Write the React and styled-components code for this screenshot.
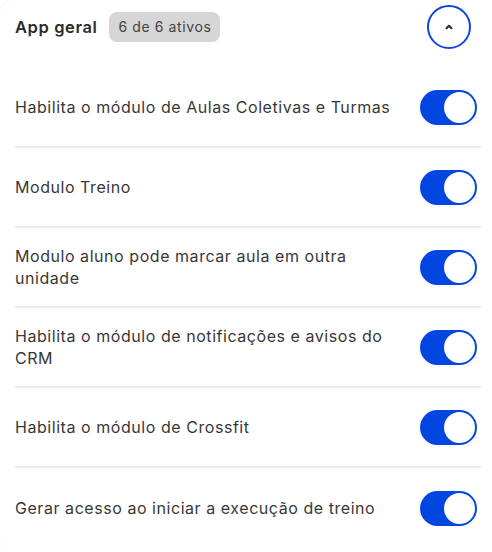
import React, { useState } from "react";
import styled, { createGlobalStyle } from "styled-components";

const GlobalStyle = createGlobalStyle`
  body {
    margin: 0;
    background: #ffffff;
    font-family: "Inter", "Noto Sans", sans-serif;
    overflow: hidden;
  }
`;

const Card = styled.div`
  width: 492px;
  height: 548px;
  background: #ffffff;
  border-radius: 14px 0 0 14px;
  box-shadow: 0 0 3px rgba(0, 0, 0, 0.08);
  box-sizing: border-box;
  padding: 0 11px 0 15px;
`;

const Header = styled.div`
  height: 68px;
  display: flex;
  align-items: center;
  padding-bottom: 14px;
  box-sizing: border-box;
`;

const Title = styled.h2`
  margin: 0;
  font-size: 16.5px;
  font-weight: 600;
  color: #2b2b2b;
  letter-spacing: 0.6px;
`;

const Badge = styled.span`
  margin-left: 12px;
  background: #d6d6d6;
  color: #444;
  font-size: 14px;
  line-height: 16px;
  border-radius: 8px;
  padding: 7px 9px;
  letter-spacing: 0.6px;
`;

const CollapseButton = styled.button`
  margin-left: auto;
  margin-right: 10px;
  width: 44px;
  height: 44px;
  border-radius: 50%;
  border: 2px solid #0d46e0;
  background: #fff;
  display: flex;
  align-items: center;
  justify-content: center;
  padding: 0;
  cursor: pointer;
`;

const Row = styled.div`
  height: 80px;
  display: flex;
  align-items: center;
  justify-content: space-between;
  border-bottom: ${(p) => (p.last ? "none" : "2px solid #ebebeb")};
  box-sizing: border-box;
`;

const Label = styled.span`
  font-size: 16px;
  line-height: 22px;
  color: #383838;
  letter-spacing: 0.55px;
  max-width: 390px;
`;

const Track = styled.button`
  width: 57px;
  height: 35px;
  border-radius: 18px;
  border: none;
  padding: 2px;
  margin-right: 4px;
  background: ${(p) => (p.on ? "#0046df" : "#c9c9c9")};
  display: flex;
  justify-content: ${(p) => (p.on ? "flex-end" : "flex-start")};
  align-items: center;
  box-sizing: border-box;
  cursor: pointer;
  flex-shrink: 0;
`;

const Knob = styled.span`
  width: 31px;
  height: 31px;
  border-radius: 50%;
  background: #fff;
  display: block;
`;

const items = [
  "Habilita o módulo de Aulas Coletivas e Turmas",
  "Modulo Treino",
  "Modulo aluno pode marcar aula em outra unidade",
  "Habilita o módulo de notificações e avisos do CRM",
  "Habilita o módulo de Crossfit",
  "Gerar acesso ao iniciar a execução de treino",
];

export default function App() {
  const [state, setState] = useState(items.map(() => true));
  const active = state.filter(Boolean).length;

  const toggle = (i) => {
    setState(state.map((v, j) => (j === i ? !v : v)));
  };

  return (
    <>
      <GlobalStyle />
      <Card>
        <Header>
          <Title>App geral</Title>
          <Badge>
            {active} de {items.length} ativos
          </Badge>
          <CollapseButton>
            <svg width="12" height="12" viewBox="0 0 12 12">
              <path
                d="M3.5 7.3 L6 4.8 L8.5 7.3"
                fill="none"
                stroke="#2b2b2b"
                strokeWidth="2"
                strokeLinecap="round"
                strokeLinejoin="round"
              />
            </svg>
          </CollapseButton>
        </Header>
        {items.map((label, i) => (
          <Row key={label} last={i === items.length - 1}>
            <Label>{label}</Label>
            <Track on={state[i]} onClick={() => toggle(i)}>
              <Knob />
            </Track>
          </Row>
        ))}
      </Card>
    </>
  );
}
